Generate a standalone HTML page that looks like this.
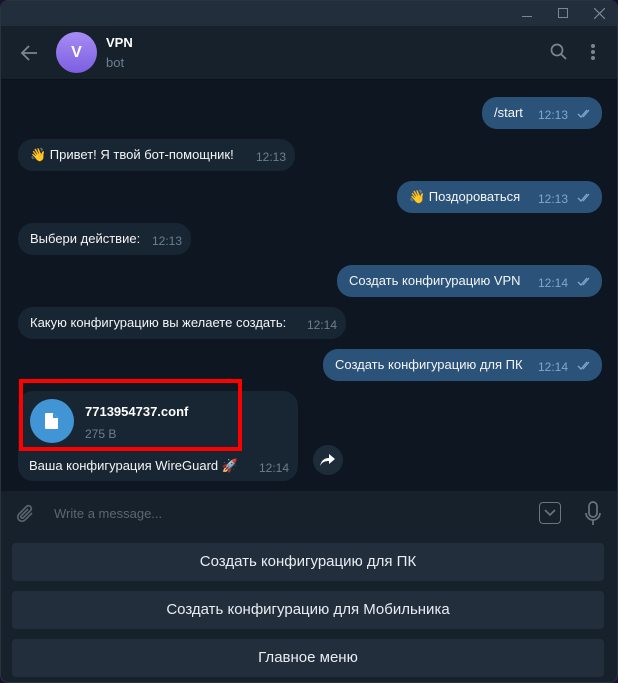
<!DOCTYPE html>
<html><head><meta charset="utf-8"><style>
*{margin:0;padding:0;box-sizing:border-box}
body{width:618px;height:683px;background:#1a1030;font-family:"Liberation Sans","DejaVu Sans",sans-serif;overflow:hidden;position:relative}
.win{position:absolute;left:0;top:0;width:618px;height:683px;background:#17212b;border-radius:8px;overflow:hidden;border:1px solid #2a3340}
.title{position:absolute;left:0;top:0;width:618px;height:25px;background:#232e3c}
.hdr{position:absolute;left:0;top:25px;width:618px;height:54px;background:#17212b;border-bottom:1px solid #0b1118}
.chat{position:absolute;left:0;top:79px;width:618px;height:411px;background:#0e1621}
.b{position:absolute;height:32px;border-radius:15px;font-size:13px;color:#f5f5f5;line-height:32px;padding-left:12px}
.in{background:#182533}
.out{background:#2b5278}
.t{position:absolute;font-size:12px;color:#6d7f8f;top:2px}
.out .t{color:#7da8d3}
.chk{position:absolute;top:12px}
.btn{position:absolute;left:11px;width:592px;height:38px;background:#232e3c;border-radius:4px;color:#e9edf1;font-size:15px;text-align:center;line-height:38px}
</style></head><body><div class="win">
<div class="title">
<div style="position:absolute;left:521px;top:15px;width:10px;height:1px;background:#7c8794"></div>
<div style="position:absolute;left:557px;top:7px;width:10px;height:10px;border:1px solid #7c8794"></div>
<svg style="position:absolute;left:593px;top:7px" width="11" height="11"><path d="M0 0L11 11M11 0L0 11" stroke="#7c8794" stroke-width="1.2"/></svg>
</div>
<div class="hdr">
<svg style="position:absolute;left:19px;top:19px" width="18" height="16"><path d="M17 8H2M9 1L2 8l7 7" stroke="#7a8691" stroke-width="1.8" fill="none"/></svg>
<div style="position:absolute;left:55px;top:6px;width:41px;height:41px;border-radius:50%;background:linear-gradient(#a88cf5,#7b5fe0);color:#fff;font-size:16px;font-weight:bold;text-align:center;line-height:41px">V</div>
<div style="position:absolute;left:105px;top:9px;color:#fff;font-weight:bold;font-size:13px">VPN</div>
<div style="position:absolute;left:105px;top:29px;color:#6d7f8f;font-size:13px">bot</div>
<svg style="position:absolute;left:549px;top:17px" width="18" height="18"><circle cx="7" cy="7" r="5.5" stroke="#7a8691" stroke-width="1.7" fill="none"/><path d="M11 11l5 5" stroke="#7a8691" stroke-width="1.8"/></svg>
<svg style="position:absolute;left:589px;top:17px" width="8" height="20"><circle cx="3" cy="3" r="2" fill="#7a8691"/><circle cx="3" cy="9" r="2" fill="#7a8691"/><circle cx="3" cy="15" r="2" fill="#7a8691"/></svg>
</div>
<div class="chat">
<div class="b out" style="left:481px;top:17px;width:120px">/start<span class="t" style="left:56px">12:13</span><svg class="chk" style="left:95px" width="16" height="9"><path d="M1 5l3 3 6-7M6 8l6-7" stroke="#7da8d3" stroke-width="1.3" fill="none"/></svg></div>
<div class="b in" style="left:17px;top:59px;width:277px">👋 Привет! Я твой бот-помощник!<span class="t" style="left:238px">12:13</span></div>
<div class="b out" style="left:396px;top:101px;width:205px">👋 Поздороваться<span class="t" style="left:141px">12:13</span><svg class="chk" style="left:180px" width="16" height="9"><path d="M1 5l3 3 6-7M6 8l6-7" stroke="#7da8d3" stroke-width="1.3" fill="none"/></svg></div>
<div class="b in" style="left:17px;top:143px;width:173px">Выбери действие:<span class="t" style="left:134px">12:13</span></div>
<div class="b out" style="left:336px;top:185px;width:265px">Создать конфигурацию VPN<span class="t" style="left:201px">12:14</span><svg class="chk" style="left:240px" width="16" height="9"><path d="M1 5l3 3 6-7M6 8l6-7" stroke="#7da8d3" stroke-width="1.3" fill="none"/></svg></div>
<div class="b in" style="left:17px;top:227px;width:328px">Какую конфигурацию вы желаете создать:<span class="t" style="left:289px">12:14</span></div>
<div class="b out" style="left:322px;top:269px;width:279px">Создать конфигурацию для ПК<span class="t" style="left:215px">12:14</span><svg class="chk" style="left:254px" width="16" height="9"><path d="M1 5l3 3 6-7M6 8l6-7" stroke="#7da8d3" stroke-width="1.3" fill="none"/></svg></div>
<div style="position:absolute;left:17px;top:311px;width:280px;height:90px;background:#182533;border-radius:15px">
<div style="position:absolute;left:12px;top:8px;width:44px;height:44px;border-radius:50%;background:#4195d4"></div>
<svg style="position:absolute;left:26px;top:21px" width="16" height="18"><path d="M2 1h7l5 5v10a1 1 0 0 1-1 1H2a1 1 0 0 1-1-1V2a1 1 0 0 1 1-1z" fill="#fff"/><path d="M9 1v5h5" fill="#4195d4"/></svg>
<div style="position:absolute;left:67px;top:13px;color:#fff;font-weight:bold;font-size:13px">7713954737.conf</div>
<div style="position:absolute;left:67px;top:36px;color:#6d7f8f;font-size:12px">275 B</div>
<div style="position:absolute;left:11px;top:67px;color:#f5f5f5;font-size:13px">Ваша конфигурация WireGuard 🚀</div>
<div style="position:absolute;left:241px;top:70px;color:#6d7f8f;font-size:12px">12:14</div>
</div>
<div style="position:absolute;left:18px;top:299px;width:223px;height:72px;border:4px solid #f00"></div>
<div style="position:absolute;left:312px;top:365px;width:30px;height:30px;border-radius:50%;background:#1e2c3a"></div>
<svg style="position:absolute;left:318px;top:372px" width="18" height="16"><path d="M10 2l6 5-6 5V9C6 9 3 10 1 14c1-5 4-8 9-8z" fill="#fff"/></svg>
</div>
<div style="position:absolute;left:0;top:490px;width:618px;height:45px;background:#17212b">
<svg style="position:absolute;left:14px;top:12px" width="22" height="22"><path d="M17 10l-7 7a4 4 0 0 1-6-6l8-8a3 3 0 0 1 4 4l-8 8a1.5 1.5 0 0 1-2-2l7-7" stroke="#59636e" stroke-width="1.7" fill="none"/></svg>
<div style="position:absolute;left:53px;top:15px;color:#5b6772;font-size:13px">Write a message...</div>
<div style="position:absolute;left:538px;top:11px;width:22px;height:22px;border:1.7px solid #6a757f;border-radius:4px"></div>
<svg style="position:absolute;left:543px;top:18px" width="12" height="8"><path d="M1 1l5 5 5-5" stroke="#6a757f" stroke-width="1.6" fill="none"/></svg>
<svg style="position:absolute;left:583px;top:10px" width="18" height="26"><rect x="5" y="1" width="8" height="15" rx="4" stroke="#6a757f" stroke-width="1.7" fill="none"/><path d="M2 12a7 7 0 0 0 14 0M9 19v5" stroke="#6a757f" stroke-width="1.7" fill="none"/></svg>
</div>
<div class="btn" style="top:542px">Создать конфигурацию для ПК</div>
<div class="btn" style="top:590px">Создать конфигурацию для Мобильника</div>
<div class="btn" style="top:638px">Главное меню</div>
</div></body></html>
